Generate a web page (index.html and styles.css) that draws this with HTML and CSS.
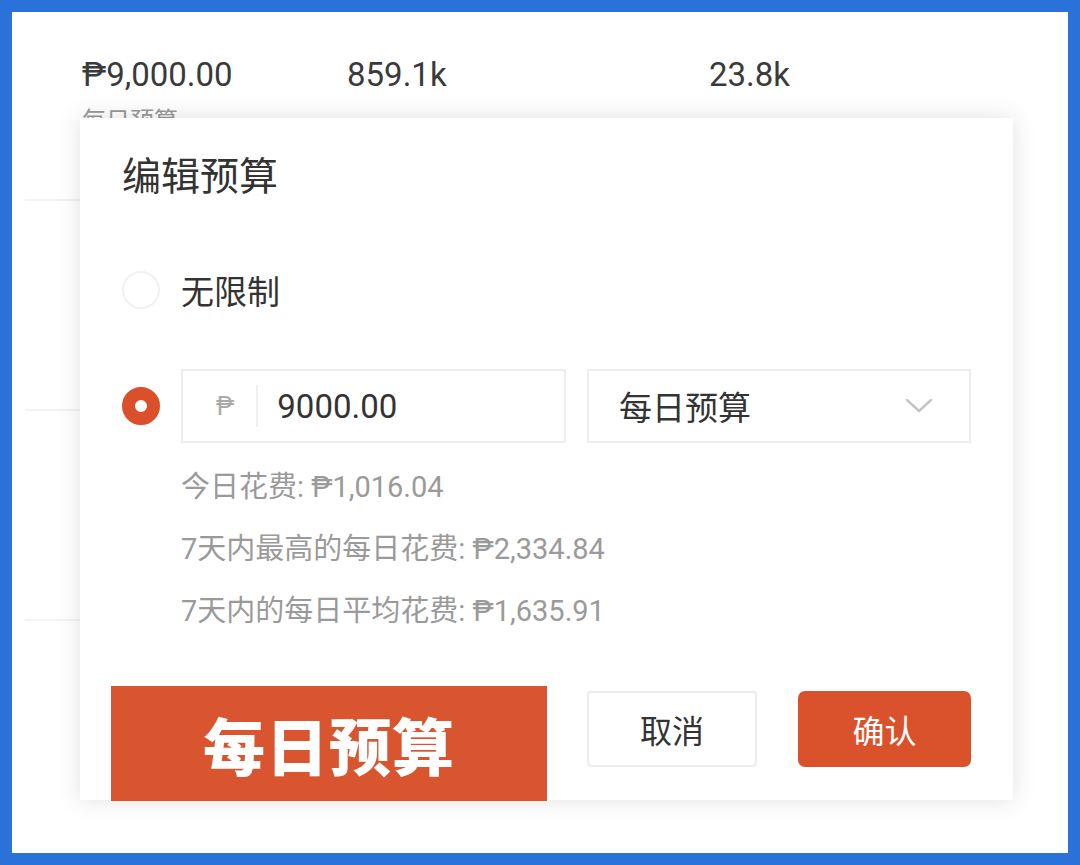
FILE: index.html
```html
<!DOCTYPE html>
<html lang="zh-CN">
<head>
  <meta charset="UTF-8">
  <meta name="viewport" content="width=device-width, initial-scale=1.0">
  <title>编辑预算</title>
  <link rel="stylesheet" href="styles.css">
</head>
<body>
  <div class="screen">
    <div class="stats">
      <div class="stat stat-budget">
        <div class="stat-value">₱9,000.00</div>
        <div class="stat-label">每日预算</div>
      </div>
      <div class="stat stat-views">
        <div class="stat-value">859.1k</div>
      </div>
      <div class="stat">
        <div class="stat-value">23.8k</div>
      </div>
    </div>
    <div class="bg-rows">
      <div class="bg-row"></div>
      <div class="bg-row"></div>
      <div class="bg-row"></div>
    </div>

    <div class="modal">
      <h2 class="modal-title">编辑预算</h2>

      <div class="option option-plain">
        <span class="radio"></span>
        <span class="option-text">无限制</span>
      </div>

      <div class="option option-amount">
        <span class="radio checked"></span>
        <div class="amount-input">
          <span class="currency">₱</span>
          <span class="divider"></span>
          <span class="amount-value">9000.00</span>
        </div>
        <div class="select">
          <span>每日预算</span>
          <svg class="chevron" width="28" height="16" viewBox="0 0 28 16">
            <polyline points="2,2 14,13 26,2" fill="none" stroke="#c4c4c4" stroke-width="2.4" stroke-linecap="round" stroke-linejoin="round"/>
          </svg>
        </div>
      </div>

      <div class="hints">
        <p>今日花费: ₱1,016.04</p>
        <p>7天内最高的每日花费: ₱2,334.84</p>
        <p>7天内的每日平均花费: ₱1,635.91</p>
      </div>

      <div class="actions">
        <button class="btn btn-cancel">取消</button>
        <button class="btn btn-ok">确认</button>
      </div>
    </div>

    <div class="tag">每日预算</div>
  </div>
</body>
</html>
```

FILE: styles.css
```css
body {
  margin: 0;
  font-family: Roboto, "Noto Sans CJK SC", sans-serif;
  color: #333;
}

.screen {
  position: relative;
  width: 1080px;
  height: 865px;
  box-sizing: border-box;
  border: 12px solid #2a72d9;
  background-color: #fff;
  overflow: hidden;
}

.stats {
  display: flex;
  padding: 43px 0 0 70px;
}

.stat-budget {
  width: 265px;
}

.stat-views {
  width: 362px;
}

.stat-value {
  font-size: 33px;
  line-height: 40px;
  color: #3a3a3a;
}

.stat-label {
  margin-top: 10px;
  font-size: 24px;
  line-height: 32px;
  color: #999;
}

.bg-rows {
  margin: 0 80px 0 13px;
}

.bg-row {
  height: 62px;
  border-bottom: 2px solid #f3f3f3;
}

.bg-row + .bg-row {
  height: 208px;
}

.modal {
  position: absolute;
  left: 68px;
  top: 106px;
  width: 933px;
  height: 682px;
  box-sizing: border-box;
  padding: 34px 42px 0;
  background-color: #fff;
  box-shadow: 0 0 24px rgba(0, 0, 0, 0.12);
}

.modal-title {
  margin: 0;
  font-size: 39px;
  line-height: 50px;
  font-weight: normal;
  color: #333;
}

.option {
  display: flex;
  align-items: center;
  height: 74px;
}

.option-plain {
  margin-top: 51px;
}

.option-amount {
  margin-top: 42px;
}

.radio {
  flex: none;
  width: 38px;
  height: 38px;
  box-sizing: border-box;
  border: 2px solid #f1f1f1;
  border-radius: 50%;
  margin-right: 21px;
}

.radio.checked {
  border: 13px solid #d9502b;
  background-color: #fff;
}

.option-text {
  font-size: 33px;
  color: #333;
}

.amount-input,
.select {
  display: flex;
  align-items: center;
  height: 74px;
  box-sizing: border-box;
  border: 2px solid #eeeeee;
  font-size: 33px;
  color: #333;
}

.amount-input {
  width: 385px;
  padding-left: 33px;
}

.currency {
  font-size: 25px;
  color: #aaa;
}

.divider {
  width: 2px;
  height: 42px;
  margin: 0 19px 0 22px;
  background-color: #efefef;
}

.select {
  width: 384px;
  margin-left: 21px;
  padding: 0 36px 0 30px;
  justify-content: space-between;
}

.hints {
  margin-top: 13px;
  padding-left: 59px;
}

.hints p {
  margin: 0;
  font-size: 29px;
  line-height: 62px;
  color: #9a9a9a;
}

.actions {
  display: flex;
  justify-content: flex-end;
  gap: 41px;
  margin-top: 49px;
}

.btn {
  height: 76px;
  font-family: Roboto, "Noto Sans CJK SC", sans-serif;
  font-size: 32px;
  border-radius: 4px;
  cursor: pointer;
}

.btn-cancel {
  width: 170px;
  background-color: #fff;
  border: 2px solid #ececec;
  color: #333;
}

.btn-ok {
  width: 173px;
  background-color: #d9522c;
  border: none;
  border-radius: 7px;
  color: #fff;
}

.tag {
  position: absolute;
  left: 99px;
  top: 674px;
  width: 436px;
  height: 115px;
  display: flex;
  align-items: center;
  justify-content: center;
  background-color: #d9552f;
  color: #fff;
  font-family: "Noto Sans CJK SC", sans-serif;
  font-size: 62px;
  font-weight: 900;
  letter-spacing: 1px;
}
```
